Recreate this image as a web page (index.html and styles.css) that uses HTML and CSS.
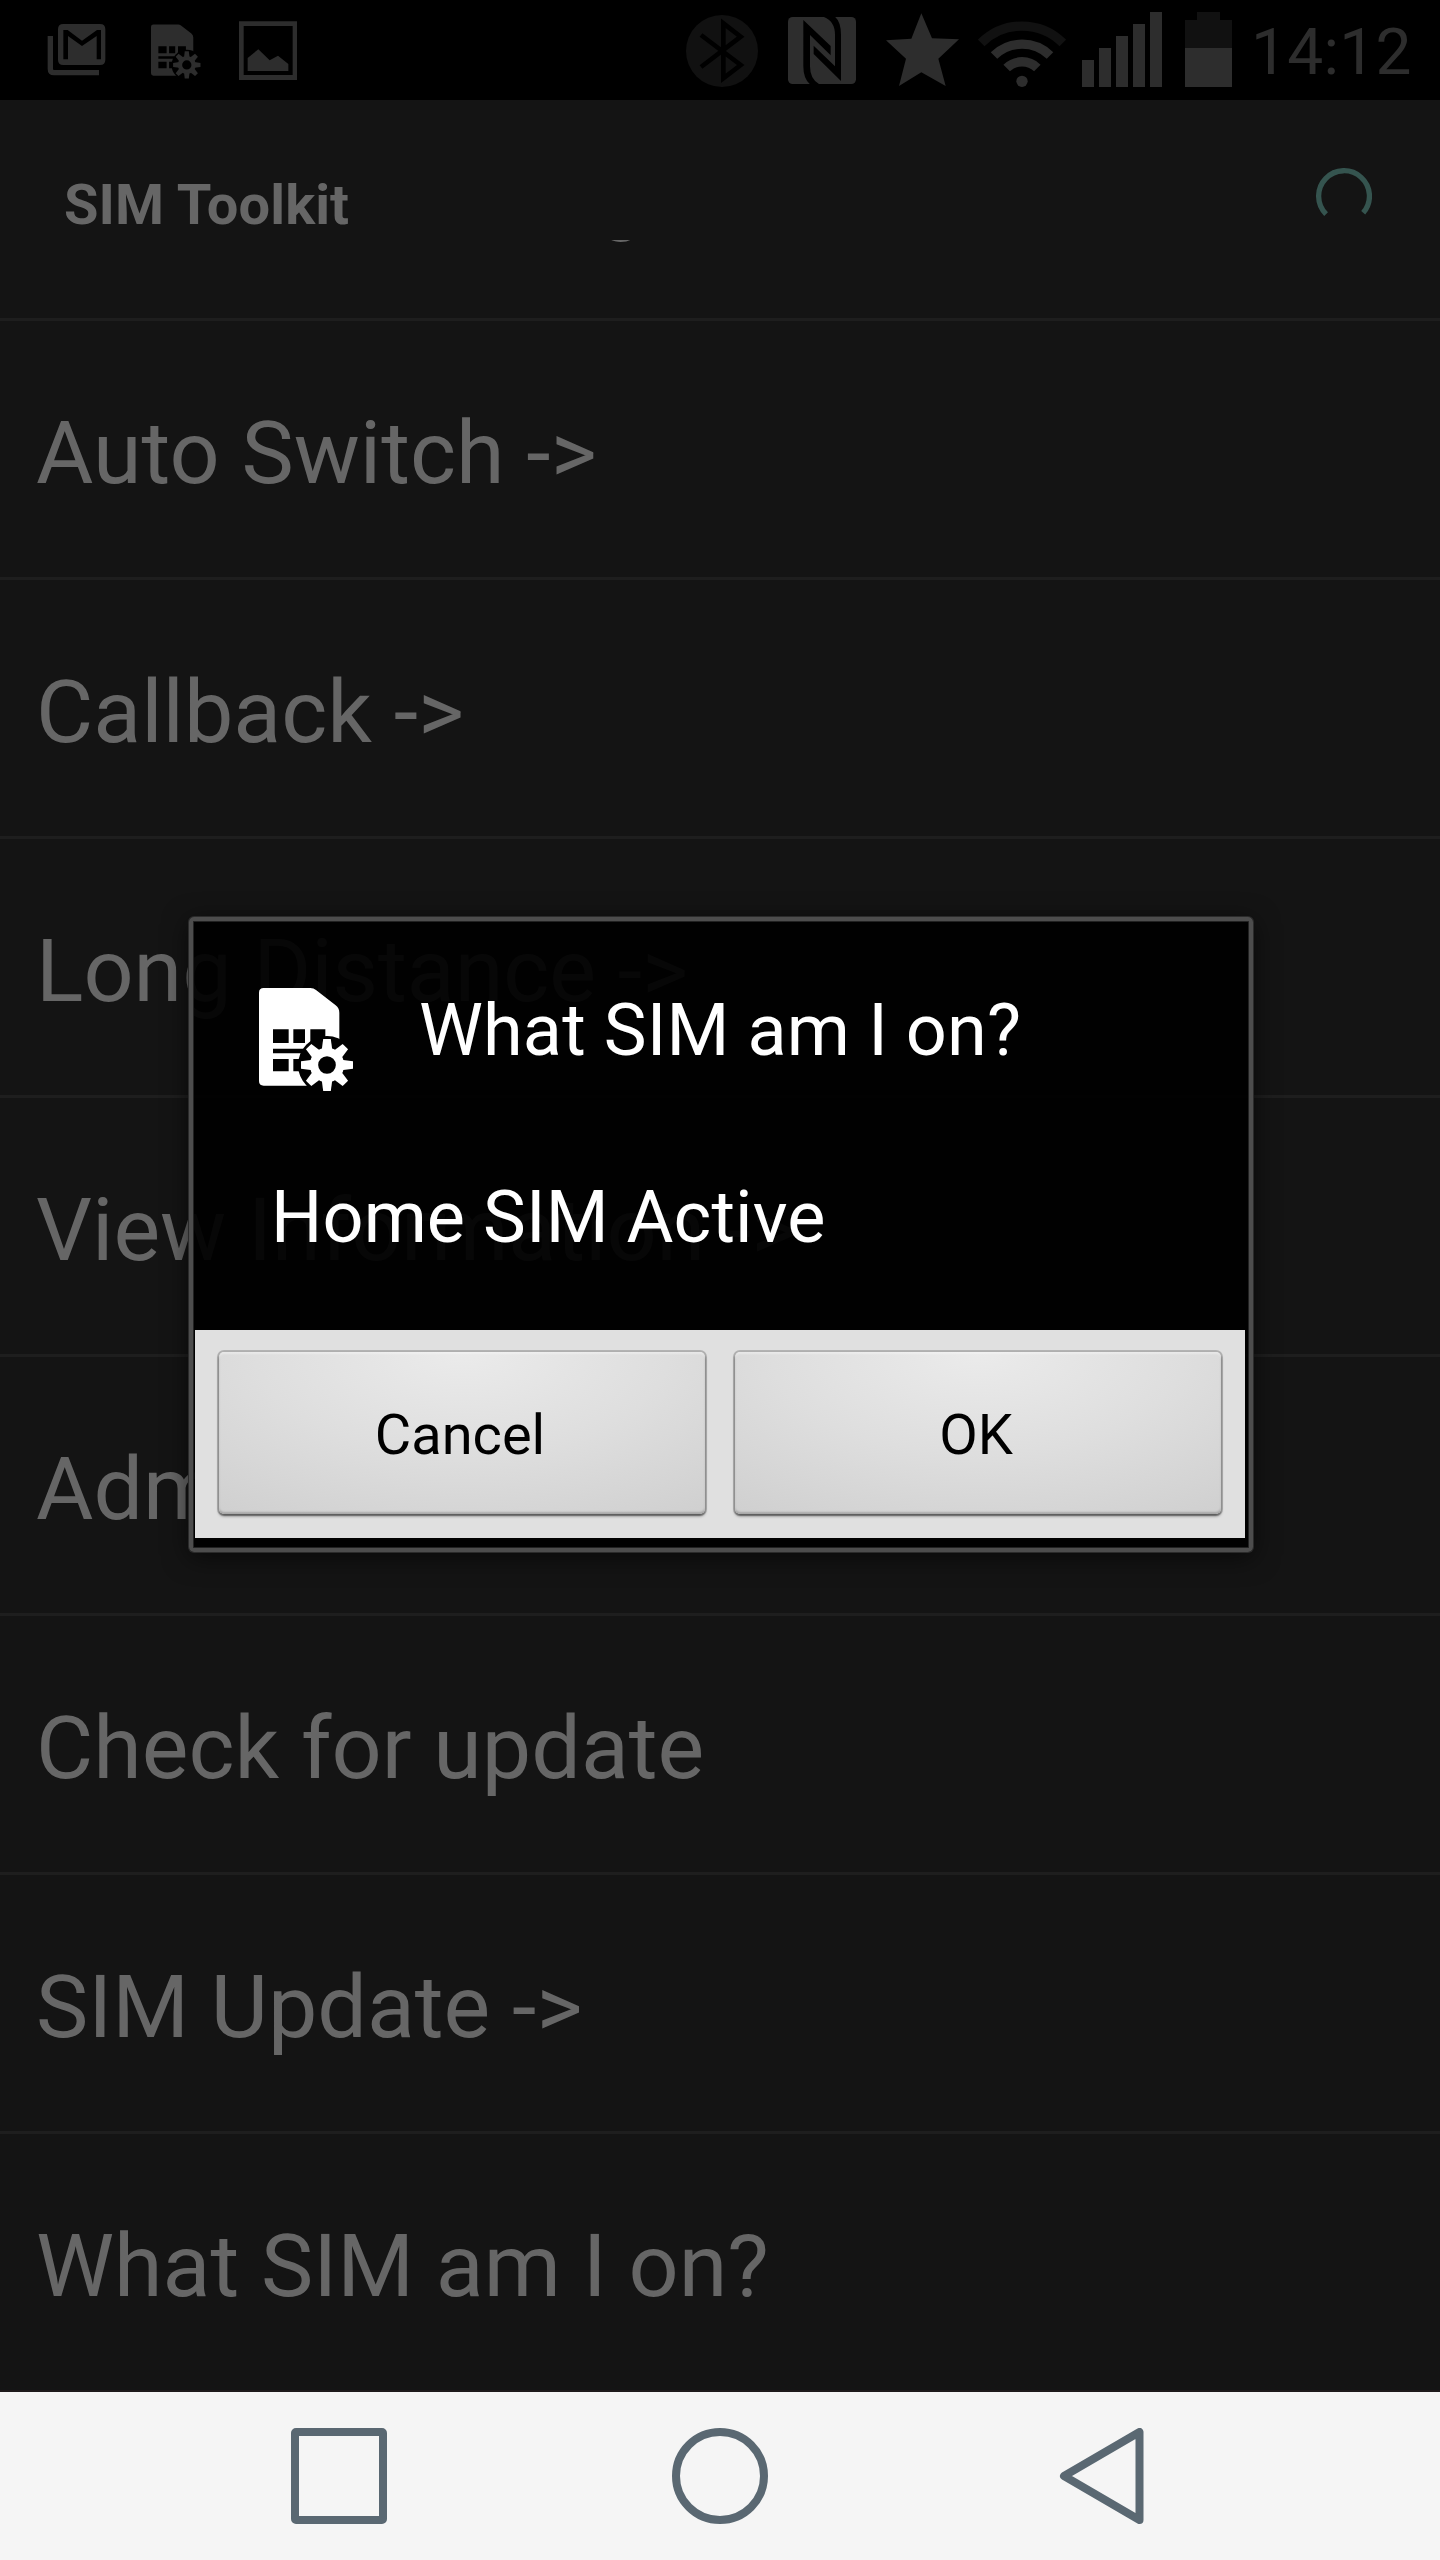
FILE: index.html
```html
<!DOCTYPE html>
<html lang="en">
<head>
<meta charset="utf-8">
<title>SIM Toolkit</title>
<link rel="stylesheet" href="styles.css">
</head>
<body>
<svg class="defs" aria-hidden="true">
  <defs>
    <mask id="gear-gap" maskUnits="userSpaceOnUse" x="50" y="40" width="300" height="330">
      <rect x="50" y="40" width="300" height="330" fill="#fff"/>
      <circle cx="262" cy="285" r="87" fill="#000"/>
    </mask>
    <path id="tooth" d="M246 242L250.500 207H273.500L278 242Z"/>
    <symbol id="sim" viewBox="58 54 285 309">
      <path mask="url(#gear-gap)" fill-rule="evenodd" d="M72 54H212Q222 54 229 60L288 106Q299 115 299 128V347H72Q58 347 58 333V68Q58 54 72 54ZM100 178V219H147V178ZM161 178V219H196V178ZM212 178V219H257V178ZM100 236V250H190V236ZM100 267V304H147V267ZM161 267V304H190V267Z"/>
      <circle cx="262" cy="285" r="39" fill="none" stroke="currentColor" stroke-width="25"/>
      <use href="#tooth"/>
      <use href="#tooth" transform="rotate(45 262 285)"/>
      <use href="#tooth" transform="rotate(90 262 285)"/>
      <use href="#tooth" transform="rotate(135 262 285)"/>
      <use href="#tooth" transform="rotate(180 262 285)"/>
      <use href="#tooth" transform="rotate(225 262 285)"/>
      <use href="#tooth" transform="rotate(270 262 285)"/>
      <use href="#tooth" transform="rotate(315 262 285)"/>
    </symbol>
  </defs>
</svg>
<div class="screen">
  <header class="status">
    <svg class="mail" viewBox="141 0 177 300">
      <path fill="none" stroke="currentColor" stroke-width="16" d="M151 108V207Q151 218 162 218H297"/>
      <path fill-rule="evenodd" d="M190 72H300Q316 72 316 88V179Q316 195 300 195H190Q174 195 174 179V88Q174 72 190 72ZM190 90V178H204V108L246 138L290 108V178H303V90H291L246 122L203 90Z"/>
    </svg>
    <svg class="sim-small"><use href="#sim"/></svg>
    <svg class="picture" viewBox="717 0 174 300">
      <path fill-rule="evenodd" d="M717 64H891V240H717ZM731 78V225H878V78ZM743 213V174L775 148L809 181L834 167L865 192V213Z"/>
    </svg>
    <svg class="bluetooth" viewBox="78 0 216 300">
      <circle cx="186" cy="153" r="108" class="dim"/>
      <path class="cut" d="M123 105L242 195L190 235V70L242 110L123 201" stroke-width="14"/>
    </svg>
    <svg class="nfc" viewBox="384 0 204 300">
      <rect x="384" y="51" width="204" height="201" rx="14"/>
      <path class="black" d="M430 60L512 138V166L450 105V199Q450 238 478 253H450Q430 236 430 199ZM543 243L461 162V137L525 199V105Q525 62 490 50H525Q543 66 543 104Z"/>
    </svg>
    <svg class="star" viewBox="679 0 219 300"><path d="M785 40L817 115L898 118L836 176L858 258L785 217L718 258L739 176L679 121L755 116Z"/></svg>
    <svg class="wifi" viewBox="954 0 264 300">
      <g fill="none" stroke="currentColor" stroke-width="28">
        <path class="dim-line" d="M963.500 129A173 173 0 0 1 1208.500 129"/>
        <path d="M1002 166.500A121 121 0 0 1 1170 166.500"/>
        <path d="M1040 204A66 66 0 0 1 1132 204"/>
      </g>
      <circle cx="1086" cy="244" r="17"/>
    </svg>
    <svg class="signal" viewBox="126 0 240 300"><path d="M126 180h36v81h-36zM177 144h36v117h-36zM228 108h36v153h-36zM279 72h36v189h-36zM330 36h36v225h-36z"/></svg>
    <svg class="battery" viewBox="435 0 141 300"><path class="dim" d="M471 36H540V60H576V144H435V60H471Z"/><path d="M435 144H576V261H435Z"/></svg>
    <span class="clock">14:12</span>
  </header>
  <div class="appbar">
    <h1>SIM Toolkit</h1>
    <svg class="spinner" viewBox="-28 -28 56 56"><path d="M-17.900 18.100A25.400 25.400 0 1 1 19.200 16.800"/></svg>
  </div>
  <ul class="list">
    <li class="scrolled">g</li>
    <li>Auto Switch -&gt;</li>
    <li>Callback -&gt;</li>
    <li>Long Distance -&gt;</li>
    <li>View Information -&gt;</li>
    <li>Admin -&gt;</li>
    <li>Check for update</li>
    <li>SIM Update -&gt;</li>
    <li>What SIM am I on?</li>
  </ul>
  <nav class="nav">
    <span class="square"></span>
    <span class="circle"></span>
    <svg class="back" viewBox="1059 2428 85 96"><path d="M1064 2476L1139.500 2432V2520Z"/></svg>
  </nav>
  <section class="dialog">
    <div class="heading">
      <svg class="sim-large"><use href="#sim"/></svg>
      <h2>What SIM am I on?</h2>
    </div>
    <p class="message">Home SIM Active</p>
    <div class="actions">
      <button>Cancel</button>
      <button>OK</button>
    </div>
  </section>
</div>
</body>
</html>
```

FILE: styles.css
```css
* { box-sizing: border-box; }
body { margin: 0; background: #141414; font-family: Roboto, "Liberation Sans", sans-serif; }
h1, h2, p, ul { margin: 0; padding: 0; }
.defs { position: absolute; width: 0; height: 0; }
svg { display: block; flex: none; fill: currentColor; }

.screen {
  position: relative;
  display: flex;
  flex-direction: column;
  width: 1440px;
  height: 2560px;
  overflow: hidden;
}

.status {
  display: flex;
  height: 100px;
  flex: none;
  padding-left: 47px;
  background: #000;
  color: #2d2d2d;
}
.status svg { height: 100px; }
.status .mail { width: 59px; }
.status .sim-small { width: 50px; height: 55px; margin: 24px 0 0 45px; }
.status .picture { width: 58px; margin-left: 38px; }
.status .bluetooth { width: 72px; margin-left: 389px; }
.status .nfc { width: 68px; margin-left: 30px; }
.status .star { width: 73px; margin-left: 30px; }
.status .wifi { width: 88px; margin-left: 19px; }
.status .signal { width: 80px; margin-left: 16px; }
.status .battery { width: 47px; margin-left: 23px; }
.clock { margin-left: 19px; font-size: 64px; line-height: 106px; letter-spacing: .3px; white-space: nowrap; }
.dim { fill: #111; }
.dim-line { stroke: #111; }
.cut { fill: none; stroke: #000; }
.black { fill: #000; }

.appbar {
  display: flex;
  justify-content: space-between;
  align-items: flex-start;
  height: 140px;
  flex: none;
  padding: 68px 68px 0 64px;
  color: #666;
}
.appbar h1 { font-size: 56px; line-height: 74px; font-weight: 700; letter-spacing: .1px; }
.spinner { width: 56px; height: 56px; }
.spinner path { fill: none; stroke: #35544f; stroke-width: 5.300px; }

.list {
  display: flex;
  flex-direction: column;
  justify-content: flex-end;
  height: 2152px;
  flex: none;
  overflow: hidden;
  list-style: none;
  border-bottom: 2px solid #1e1a1b;
}
.list li {
  height: 259px;
  flex: none;
  padding: 8px 36px 0;
  border-bottom: 3px solid #1e1e1e;
  color: #666;
  font-size: 88px;
  line-height: 248px;
  white-space: nowrap;
}
.list li:last-child { height: 256px; border-bottom: 0; }
.list .scrolled { padding-left: 597px; }

.nav { display: flex; align-items: center; height: 168px; flex: none; padding-left: 291px; background: #f5f5f5; color: #5a6872; }
.square, .circle { width: 96px; height: 96px; border: 8px solid; }
.square { border-radius: 5px; }
.circle { margin-left: 285px; border-radius: 50%; }
.back { width: 85px; height: 96px; margin-left: 291px; }
.back path { fill: none; stroke: currentColor; stroke-width: 8px; stroke-linejoin: round; }

.dialog {
  position: absolute;
  left: 189px;
  top: 917px;
  display: flex;
  flex-direction: column;
  width: 1064px;
  height: 635px;
  padding: 0 4px 0 2px;
  border: 4px solid #4d4d4d;
  border-radius: 5px;
  background: rgba(0, 0, 0, .925);
  box-shadow: 0 0 0 1px #2b2b2b, inset 0 0 0 1px #222, 0 5px 26px rgba(0, 0, 0, .6);
  color: #fff;
}
.heading { display: flex; height: 213px; padding: 67px 0 0 64px; }
.sim-large { width: 95px; height: 103px; }
.heading h2 { margin: -2px 0 0 65px; font-size: 72px; line-height: 90px; font-weight: 400; letter-spacing: .15px; white-space: nowrap; }
.message { height: 196px; padding: 39px 0 0 76px; font-size: 72px; line-height: 90px; letter-spacing: .1px; }
.actions {
  display: flex;
  gap: 30px;
  height: 208px;
  padding: 22px 24px 24px 24px;
  background: #e0e0e0;
}
.actions button {
  flex: 1;
  border: 0;
  border-radius: 5px;
  padding: 3px 4px 0 0;
  background: radial-gradient(ellipse 85% 125% at 50% 0, #ebebeb, #dedede 50%, #cfcfcf);
  box-shadow: 0 0 0 2px rgba(0, 0, 0, .2), 0 2px 3px rgba(0, 0, 0, .55), inset 0 2px 2px rgba(255, 255, 255, .35), inset 0 -2px 2px rgba(0, 0, 0, .2);
  color: #000;
  font: 400 56px/66px Roboto, "Liberation Sans", sans-serif;
}
```
